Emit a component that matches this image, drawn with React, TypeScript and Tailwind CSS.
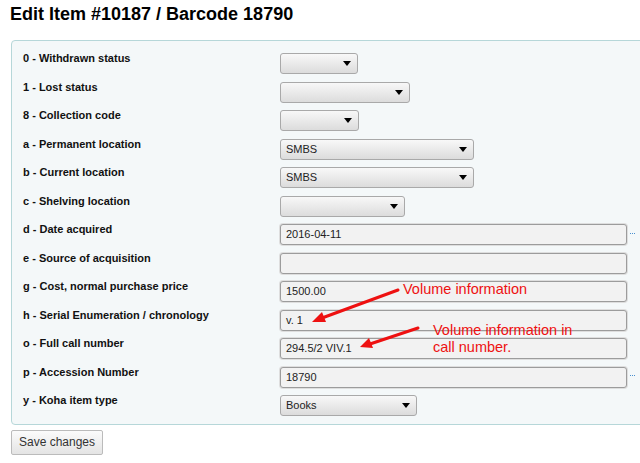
import React from "react";

type Row = {
  label: string;
  kind: "select" | "input";
  value?: string;
  width?: string;
  dots?: boolean;
};

const rows: Row[] = [
  { label: "0 - Withdrawn status", kind: "select", width: "w-[78px]" },
  { label: "1 - Lost status", kind: "select", width: "w-[130px]" },
  { label: "8 - Collection code", kind: "select", width: "w-[79px]" },
  { label: "a - Permanent location", kind: "select", width: "w-[194px]", value: "SMBS" },
  { label: "b - Current location", kind: "select", width: "w-[194px]", value: "SMBS" },
  { label: "c - Shelving location", kind: "select", width: "w-[125px]" },
  { label: "d - Date acquired", kind: "input", value: "2016-04-11", dots: true },
  { label: "e - Source of acquisition", kind: "input", value: "" },
  { label: "g - Cost, normal purchase price", kind: "input", value: "1500.00" },
  { label: "h - Serial Enumeration / chronology", kind: "input", value: "v. 1" },
  { label: "o - Full call number", kind: "input", value: "294.5/2 VIV.1" },
  { label: "p - Accession Number", kind: "input", value: "18790", dots: true },
  { label: "y - Koha item type", kind: "select", width: "w-[137px]", value: "Books" },
];

function FakeSelect({ width, value }: { width?: string; value?: string }) {
  return (
    <div
      className={`${width} h-[21px] flex items-center justify-between pl-[5px] pr-[6px] rounded-[3px] border border-[#a9a9a9] bg-gradient-to-b from-[#f8f8f8] to-[#dcdcdc] text-[11px] text-[#222]`}
    >
      <span>{value}</span>
      <span className="w-0 h-0 border-l-[4px] border-r-[4px] border-t-[5px] border-l-transparent border-r-transparent border-t-black" />
    </div>
  );
}

function FakeInput({ value, dots }: { value?: string; dots?: boolean }) {
  return (
    <div className="flex items-center">
      <div className="w-[347px] h-[21px] flex items-center pl-[5px] rounded-[3px] border border-[#9c9c9c] bg-[#f2f2f2] shadow-[0_0_0_1px_#dedede] text-[11px] text-[#222]">
        {value}
      </div>
      {dots && (
        <span className="ml-[3px] -mt-[3px] flex gap-[1px]">
          <span className="w-[1px] h-[1px] bg-[#4a90d0]" />
          <span className="w-[1px] h-[1px] bg-[#4a90d0]" />
          <span className="w-[1px] h-[1px] bg-[#4a90d0]" />
        </span>
      )}
    </div>
  );
}

export default function App() {
  return (
    <div className="relative w-[640px] h-[463px] overflow-hidden bg-white font-['Liberation_Sans',Arial,sans-serif]">
      <h1 className="ml-[10px] mt-[3px] text-[18px] leading-[22px] font-bold text-black">
        Edit Item #10187 / Barcode 18790
      </h1>

      <div className="ml-[11px] mt-[15px] w-[660px] pt-[12px] border border-[#b6d7d9] rounded-[4px] bg-[#f4f8f9]">
        {rows.map((row) => (
          <div key={row.label} className="h-[28.5px] flex items-start">
            <div className="w-[268px] pl-[11px] text-[11px] leading-[11px] font-bold text-[#111]">
              {row.label}
            </div>
            {row.kind === "select" ? (
              <FakeSelect width={row.width} value={row.value} />
            ) : (
              <FakeInput value={row.value} dots={row.dots} />
            )}
          </div>
        ))}
      </div>

      <button className="ml-[11px] mt-[5px] w-[92px] h-[25px] border border-[#bbbbbb] rounded-[2px] bg-gradient-to-b from-[#fbfbfb] to-[#e4e4e4] text-[12px] text-[#333]">
        Save changes
      </button>

      {/* annotations */}
      <div className="absolute left-[403px] top-[281px] text-[14.5px] leading-[17px] text-[#ee1111]">
        Volume information
      </div>
      <div className="absolute left-[433px] top-[322px] text-[14.5px] leading-[17px] text-[#ee1111]">
        Volume information in
        <br />
        call number.
      </div>
      <svg className="absolute left-0 top-0" width="640" height="463" viewBox="0 0 640 463">
        <line x1="398" y1="290" x2="322" y2="318" stroke="#ee1111" strokeWidth="3" strokeLinecap="round" />
        <polygon points="312,322 322,312 326,322" fill="#ee1111" />
        <line x1="418" y1="328" x2="370" y2="344" stroke="#ee1111" strokeWidth="3" strokeLinecap="round" />
        <polygon points="360,347 369,338 373,348" fill="#ee1111" />
      </svg>
    </div>
  );
}
